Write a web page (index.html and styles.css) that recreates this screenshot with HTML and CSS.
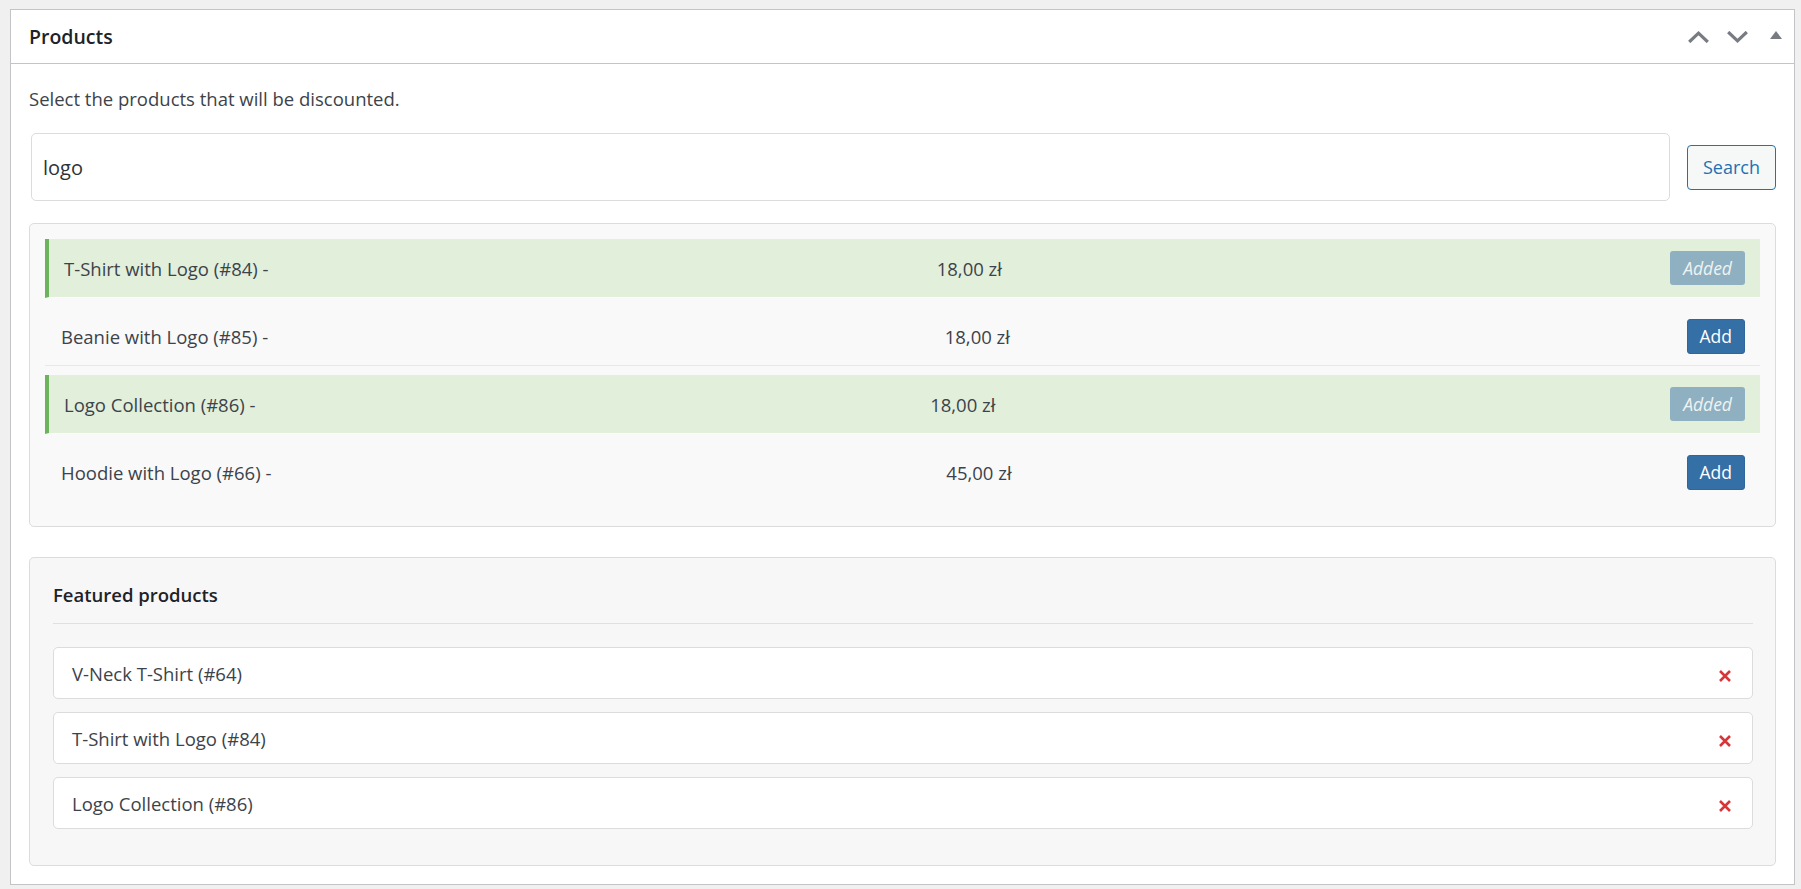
FILE: index.html
```html
<!DOCTYPE html>
<html lang="pl">
<head>
<meta charset="utf-8">
<title>Products</title>
<link rel="stylesheet" href="styles.css">
</head>
<body>
<div class="postbox">
  <div class="postbox-header">
    <h2 class="hndle">Products</h2>
    <div class="handle-actions">
      <button class="handle-btn" type="button" aria-label="Move up">
        <svg class="chev" width="21" height="12" viewBox="0 0 21 12"><polyline points="1.2,11 10.5,2.2 19.8,11"/></svg>
      </button>
      <button class="handle-btn" type="button" aria-label="Move down">
        <svg class="chev" width="21" height="12" viewBox="0 0 21 12"><polyline points="1.2,1 10.5,9.8 19.8,1"/></svg>
      </button>
      <button class="handle-btn" type="button" aria-label="Toggle panel">
        <svg class="tri" width="12" height="8" viewBox="0 0 12 8"><polygon points="0,8 6,0 12,8"/></svg>
      </button>
    </div>
  </div>
  <div class="inside">
    <p class="intro">Select the products that will be discounted.</p>
    <div class="search-row">
      <input class="search-input" type="text" value="logo">
      <button class="btn-search" type="button">Search</button>
    </div>
    <ul class="results">
      <li class="result added">
        <span class="r-name">T-Shirt with Logo (#84) -</span>
        <span class="r-price">18,00 zł</span>
        <button class="btn btn-added" type="button">Added</button>
      </li>
      <li class="result">
        <span class="r-name">Beanie with Logo (#85) -</span>
        <span class="r-price">18,00 zł</span>
        <button class="btn btn-add" type="button">Add</button>
      </li>
      <li class="result added">
        <span class="r-name">Logo Collection (#86) -</span>
        <span class="r-price">18,00 zł</span>
        <button class="btn btn-added" type="button">Added</button>
      </li>
      <li class="result">
        <span class="r-name">Hoodie with Logo (#66) -</span>
        <span class="r-price">45,00 zł</span>
        <button class="btn btn-add" type="button">Add</button>
      </li>
    </ul>
    <div class="featured">
      <h3 class="featured-title">Featured products</h3>
      <ul class="featured-list">
        <li class="f-item">
          <span class="f-name">V-Neck T-Shirt (#64)</span>
          <button class="remove" type="button" aria-label="Remove"><svg width="12" height="12" viewBox="0 0 12 12"><path d="M1 1 L11 11 M11 1 L1 11"/></svg></button>
        </li>
        <li class="f-item">
          <span class="f-name">T-Shirt with Logo (#84)</span>
          <button class="remove" type="button" aria-label="Remove"><svg width="12" height="12" viewBox="0 0 12 12"><path d="M1 1 L11 11 M11 1 L1 11"/></svg></button>
        </li>
        <li class="f-item">
          <span class="f-name">Logo Collection (#86)</span>
          <button class="remove" type="button" aria-label="Remove"><svg width="12" height="12" viewBox="0 0 12 12"><path d="M1 1 L11 11 M11 1 L1 11"/></svg></button>
        </li>
      </ul>
    </div>
  </div>
</div>
</body>
</html>
```

FILE: styles.css
```css
* {
  box-sizing: border-box;
}

html,
body {
  margin: 0;
}

body {
  background: #f0f0f1;
  padding: 9px 6px 0 10px;
  font-family: "Open Sans", "Noto Sans", sans-serif;
  font-size: 18.5px;
  color: #3c434a;
}

.postbox {
  background: #fff;
  border: 1px solid #c3c4c7;
}

.postbox-header {
  display: flex;
  align-items: center;
  justify-content: space-between;
  height: 54px;
  border-bottom: 1px solid #c3c4c7;
}

.hndle {
  margin: 0;
  padding-left: 18px;
  font-size: 19.5px;
  font-weight: 600;
  line-height: 1.4;
  color: #1d2327;
}

.handle-actions {
  display: flex;
  gap: 3px;
  align-self: stretch;
}

.handle-btn {
  width: 36px;
  border: 0;
  background: none;
  padding: 0;
  display: flex;
  align-items: center;
  justify-content: center;
  cursor: pointer;
}

.chev polyline {
  fill: none;
  stroke: #787c82;
  stroke-width: 3.2;
}

.tri {
  margin-bottom: 4px;
}

.tri polygon {
  fill: #787c82;
}

.inside {
  padding: 0 18px 18px;
}

.intro {
  margin: 21px 0 0;
  line-height: 27px;
}

.search-row {
  display: flex;
  align-items: center;
  gap: 17px;
  margin-top: 21px;
}

.search-input {
  flex: 1;
  min-width: 0;
  height: 68px;
  margin-left: 2px;
  border: 1px solid #dcdcde;
  border-radius: 5px;
  padding: 0 11px;
  font-family: inherit;
  font-size: 20px;
  color: #2c3338;
  background: #fff;
}

.btn-search {
  width: 89px;
  height: 45px;
  border: 1px solid #2271b1;
  border-radius: 4px;
  background: #f6f7f7;
  color: #2271b1;
  font-family: inherit;
  font-size: 18px;
  padding: 0;
}

.results {
  list-style: none;
  margin: 22px 0 0;
  padding: 15px 15px 15px;
  background: #f9f9f9;
  border: 1px solid #dcdcde;
  border-radius: 5px;
}

.result {
  display: flex;
  align-items: center;
  justify-content: space-between;
  height: 59px;
  padding: 0 15px 0 16px;
  border-bottom: 1px solid #e8e8e8;
  margin-bottom: 9px;
}

.result:last-child {
  border-bottom-color: transparent;
}

.result.added {
  background: #e2efdb;
  border-left: 4px solid #6db35e;
  padding-left: 15px;
  border-bottom-color: #fbfbfb;
}

.btn {
  height: 34px;
  padding: 0 12px;
  border-radius: 3px;
  font-family: inherit;
  font-size: 17.5px;
  border: 1px solid transparent;
}

.btn-add {
  height: 35px;
  background: #346fa6;
  border-color: #2f679c;
  color: #fff;
}

.btn-added {
  background: #8eb0c0;
  color: #eef3f4;
  font-style: italic;
}

.featured {
  margin-top: 30px;
  background: #f7f7f7;
  border: 1px solid #dcdcde;
  border-radius: 5px;
  padding: 23px 22px 36px 23px;
}

.featured-title {
  margin: 0;
  padding-bottom: 15px;
  border-bottom: 1px solid #e0e0e0;
  font-size: 18.5px;
  font-weight: 600;
  line-height: 27px;
  color: #1d2327;
}

.featured-list {
  list-style: none;
  margin: 23px 0 0;
  padding: 0;
  display: flex;
  flex-direction: column;
  gap: 13px;
}

.f-item {
  height: 52px;
  display: flex;
  align-items: center;
  justify-content: space-between;
  background: #fff;
  border: 1px solid #dcdcde;
  border-radius: 5px;
  padding: 0 21px 0 18px;
}

.remove {
  border: 0;
  background: none;
  padding: 0;
  margin-top: 6px;
  display: flex;
}

.remove path {
  stroke: #d63638;
  stroke-width: 2.6;
  fill: none;
}
```
